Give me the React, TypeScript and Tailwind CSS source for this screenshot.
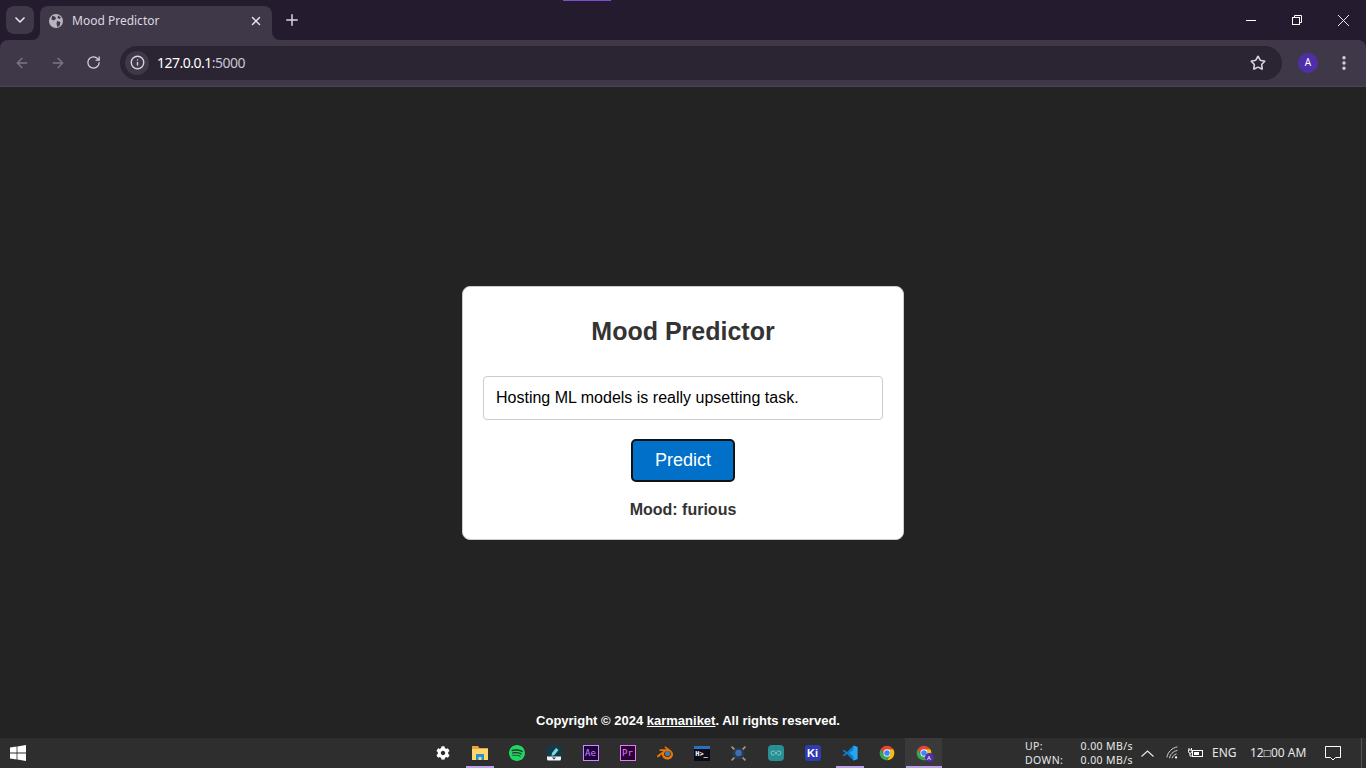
import { ChevronDown, X, Plus, ArrowLeft, ArrowRight, RotateCw, Info, Star, EllipsisVertical } from 'lucide-react'
import { FaCog } from 'react-icons/fa'
import { SiSpotify, SiBlender } from 'react-icons/si'

const sans = "font-['Liberation_Sans',Arial,sans-serif]"

function ChromeLogo({ badge }: { badge?: boolean }) {
  return (
    <span className="relative block w-4 h-4">
      <svg viewBox="0 0 48 48" className="w-4 h-4">
        <path d="M4.95 13A22 22 0 0 1 43.05 13H24A11 11 0 0 0 14.47 29.5Z" fill="#ea4335" />
        <path d="M4.95 13A22 22 0 0 1 43.05 13H24A11 11 0 0 0 14.47 29.5Z" fill="#fbbc04" transform="rotate(120 24 24)" />
        <path d="M4.95 13A22 22 0 0 1 43.05 13H24A11 11 0 0 0 14.47 29.5Z" fill="#34a853" transform="rotate(240 24 24)" />
        <circle cx="24" cy="24" r="11" fill="#fff" />
        <circle cx="24" cy="24" r="8.5" fill="#4285f4" />
      </svg>
      {badge && (
        <span className="absolute -right-[2px] -bottom-[1px] w-[9px] h-[9px] rounded-full bg-[#4f2fa8] flex items-center justify-center text-[6px] leading-none text-white">A</span>
      )}
    </span>
  )
}

function Explorer() {
  return (
    <svg viewBox="0 0 16 16" className="w-4 h-4">
      <path d="M0 1h6l1.500 2H16v3H0z" fill="#e8a33d" />
      <path d="M0 4h16v11H0z" fill="#fcd770" />
      <path d="M4 9h8v6h-2.500v-3h-3v3H4z" fill="#2b8fd6" />
    </svg>
  )
}

function Pen() {
  return (
    <svg viewBox="0 0 16 16" className="w-4 h-4">
      <rect x="0.500" y="0.500" width="15" height="15" rx="3" fill="#17384a" />
      <path d="M6 8l4-5 2.500 2-4 5-3 1z" fill="#6fe0d8" />
      <path d="M1 11.500h14v2.500a1.500 1.500 0 0 1-1.500 1.500h-11A1.500 1.500 0 0 1 1 14z" fill="#f4f4f4" />
      <path d="M6 12.500h4l-2 2z" fill="#17384a" />
    </svg>
  )
}

function Adobe({ label, box }: { label: string; box: string }) {
  return (
    <span className={`w-4 h-4 border flex items-center justify-center font-['DejaVu_Sans_Mono',monospace] text-[9px] leading-none ${box}`}>
      {label}
    </span>
  )
}

function Blender() {
  return (
    <span className="relative block w-4 h-4">
      <SiBlender className="w-4 h-4 text-[#ea7600]" />
      <span className="absolute left-[8px] top-[6px] w-[5px] h-[5px] rounded-full bg-[#3f7fb5]" />
    </span>
  )
}

function Terminal() {
  return (
    <span className="w-4 h-[15px] bg-[#0c0c16] border-t-[3px] border-t-[#2a6fc0] flex items-center justify-center font-['DejaVu_Sans_Mono',monospace] text-[7px] font-bold leading-none text-white">
      H&gt;_
    </span>
  )
}

function Drone() {
  return (
    <svg viewBox="0 0 16 16" className="w-[17px] h-[17px]">
      <path d="M1.500 1.500l13 13M14.500 1.500l-13 13" stroke="#a89a7c" strokeWidth="1.500" />
      <circle cx="8" cy="8" r="5.500" fill="#2a3a55" />
      <circle cx="8" cy="7.500" r="3" fill="#3f6fb0" />
    </svg>
  )
}

function Arduino() {
  return (
    <svg viewBox="0 0 16 16" className="w-4 h-4">
      <rect width="16" height="16" rx="4" fill="#2a8f94" />
      <path d="M8 8c-1-1.500-2-2-3-2a2 2 0 0 0 0 4c1 0 2-.5 3-2s2-2 3-2a2 2 0 0 1 0 4c-1 0-2-.5-3-2z" fill="none" stroke="#7fc6c6" strokeWidth="1" />
    </svg>
  )
}

function Kicad() {
  return (
    <span className={`w-4 h-4 rounded-[3px] bg-[#2f3bb0] flex items-center justify-center ${sans} text-[11px] font-bold leading-none text-white`}>
      Ki
    </span>
  )
}

function VsCode() {
  return (
    <svg viewBox="0 0 16 16" className="w-4 h-4">
      <path d="M11.500.500L5 7 2 4.700.500 5.500 3.300 8 .500 10.500 2 11.300 5 9l6.500 6.500L15.500 14V2z" fill="#0a7fd0" />
      <path d="M11.500.500L15.500 2v12l-4 1.500zM11.500 4.800L7.500 8l4 3.200z" fill="#2aa5ee" />
    </svg>
  )
}

const apps = [
  { key: 'gear', icon: <FaCog className="w-[14px] h-[14px] text-white" /> },
  { key: 'explorer', icon: <Explorer />, open: 'w-[28px]' },
  { key: 'spotify', icon: <SiSpotify className="w-4 h-4 text-[#1ed760]" /> },
  { key: 'pen', icon: <Pen /> },
  { key: 'ae', icon: <Adobe label="Ae" box="bg-[#1f0040] border-[#c58cff] text-[#c58cff]" /> },
  { key: 'pr', icon: <Adobe label="Pr" box="bg-[#2a0034] border-[#e779ff] text-[#e779ff]" /> },
  { key: 'blender', icon: <Blender /> },
  { key: 'terminal', icon: <Terminal /> },
  { key: 'drone', icon: <Drone /> },
  { key: 'arduino', icon: <Arduino /> },
  { key: 'kicad', icon: <Kicad /> },
  { key: 'vscode', icon: <VsCode />, open: 'w-[28px]' },
  { key: 'chrome', icon: <ChromeLogo /> },
  { key: 'profile', icon: <ChromeLogo badge />, open: 'w-[36px]', active: true },
]

export default function App() {
  return (
    <div className="w-[1366px] h-[768px] overflow-hidden flex flex-col bg-[#232323]">
      {/* Tab strip */}
      <div className="relative h-10 shrink-0 bg-[#241c2e] flex items-start pt-[6px] pl-[6px] text-[#e6e1ec]">
        <span className="absolute left-[563px] top-0 w-[48px] h-px bg-[#7a4fd0]" />
        <button className="w-7 h-7 rounded-lg bg-[#3f3849] flex items-center justify-center">
          <ChevronDown className="w-4 h-4" strokeWidth={2.500} />
        </button>
        <div className="relative ml-[6px] w-[232px] h-[34px] rounded-t-lg bg-[#3f3849] flex items-center pl-2 pr-[9px] pb-[5px]">
          <span className="absolute -left-2 bottom-0 w-2 h-2 bg-[#3f3849]"><span className="block w-2 h-2 rounded-br-lg bg-[#241c2e]" /></span>
          <span className="absolute -right-2 bottom-0 w-2 h-2 bg-[#3f3849]"><span className="block w-2 h-2 rounded-bl-lg bg-[#241c2e]" /></span>
          <svg viewBox="0 0 16 16" className="w-4 h-4 shrink-0">
            <circle cx="8" cy="8" r="7" fill="#b9b5bf" />
            <path d="M4 3l3 .500 1 2-2 2-2.500-1zM9 8l3.500 1-1 4-2 1-1-3zM10 2.500l3 2-1.500 1.500-2-1z" fill="#3f3849" />
          </svg>
          <span className="ml-2 flex-1 font-['Noto_Sans',sans-serif] text-[12px] text-[#dcd7e2]">Mood Predictor</span>
          <X className="w-[14px] h-[14px]" strokeWidth={2.500} />
        </div>
        <Plus className="ml-[11px] mt-[5px] w-[18px] h-[18px] text-[#d9d3e0]" strokeWidth={2} />
        <div className="ml-auto h-[28px] flex items-center text-white">
          <span className="w-[46px] flex justify-center"><span className="block w-[10px] h-px bg-white" /></span>
          <span className="w-[46px] flex justify-center">
            <svg viewBox="0 0 10 10" className="w-[10px] h-[10px]" fill="none" stroke="#fff" strokeWidth="1">
              <rect x="0.500" y="2.500" width="7" height="7" />
              <path d="M2.500 2.500V.500h7v7h-2" />
            </svg>
          </span>
          <span className="w-[46px] flex justify-center">
            <svg viewBox="0 0 12 12" className="w-[11px] h-[11px]" stroke="#fff" strokeWidth="1"><path d="M0 0l12 12M12 0L0 12" /></svg>
          </span>
        </div>
      </div>

      {/* Toolbar */}
      <div className="h-[47px] shrink-0 bg-[#241c2e]">
        <div className="h-full rounded-t-lg bg-[#3f3849] border-b border-b-[#4a4453] flex items-center pb-[1px] text-[#d9d3e0]">
          <span className="w-[40px] pl-[14px]"><ArrowLeft className="w-4 h-4 text-[#7c7785]" strokeWidth={2} /></span>
          <span className="w-[36px] pl-[10px]"><ArrowRight className="w-4 h-4 text-[#7c7785]" strokeWidth={2} /></span>
          <span className="w-[44px] pl-[10px]"><RotateCw className="w-[15px] h-[15px]" strokeWidth={2} /></span>
          <div className="w-[1162px] h-[34px] rounded-full bg-[#2a2433] flex items-center pl-[5px] pr-[16px]">
            <span className="w-6 h-6 rounded-full bg-[#3f3849] flex items-center justify-center">
              <Info className="w-[15px] h-[15px]" strokeWidth={2.200} />
            </span>
            <span className="ml-2 flex-1 font-['Noto_Sans',sans-serif] text-[14px] tracking-[-0.5px]">
              <span className="text-white">127.0.0.1</span><span className="text-[#c9c4d0]">:5000</span>
            </span>
            <Star className="w-4 h-4" strokeWidth={2.400} />
          </div>
          <span className="ml-4 w-5 h-5 rounded-full bg-[#4f2fa8] flex items-center justify-center font-['Noto_Sans',sans-serif] text-[10px] text-white">A</span>
          <EllipsisVertical className="ml-[17px] w-[18px] h-[18px]" strokeWidth={2.500} />
        </div>
      </div>

      {/* Page */}
      <div className={`flex-1 min-h-0 flex flex-col items-center ${sans}`}>
        <main className="flex-1 flex items-center justify-center pt-[37px]">
          <div className="w-[442px] h-[254px] rounded-lg border border-[#cccccc] bg-white px-5 pt-[25px] flex flex-col items-center">
            <h1 className="text-[25px] leading-[38px] font-bold text-[#333333]">Mood Predictor</h1>
            <input
              readOnly
              value="Hosting ML models is really upsetting task."
              className="mt-[26px] w-[400px] h-[44px] rounded-[4px] border border-[#cccccc] bg-white px-3 text-[16px] text-black outline-none"
            />
            <button className="mt-[19px] w-[104px] h-[43px] rounded-[5px] border-2 border-[#111111] bg-[#0070c9] text-[18px] text-white">Predict</button>
            <p className="mt-[19px] text-[16px] leading-[18px] font-bold text-[#333333]">Mood: furious</p>
          </div>
        </main>
        <footer className="h-[36px] pt-[11px] pl-[10px] text-[13px] leading-4 font-bold text-white">
          Copyright © 2024 <a className="underline">karmaniket</a>. All rights reserved.
        </footer>
      </div>

      {/* Taskbar */}
      <div className="h-[30px] shrink-0 bg-[#2e2e2e] flex items-stretch text-white">
        <div className="w-[424px] pl-[10px] flex items-center">
          <svg viewBox="0 0 16 16" className="w-4 h-4" fill="#fff">
            <path d="M0 2.400l6.600-.900v6H0zM7.400 1.400L16 0v7.500H7.400zM0 8.400h6.600v6L0 13.500zM7.400 8.400H16V16l-8.600-1.400z" />
          </svg>
        </div>
        <div className="flex">
          {apps.map(app => (
            <div key={app.key} className={`relative w-[37px] flex items-center justify-center ${app.active ? 'bg-[#3a3a3a]' : ''}`}>
              {app.icon}
              {app.open && <span className={`absolute bottom-0 left-1/2 -translate-x-1/2 h-[2px] bg-[#b9a0e8] ${app.open}`} />}
            </div>
          ))}
        </div>
        <div className="ml-[83px] w-[108px] flex flex-col justify-center font-['Noto_Sans',sans-serif] text-[10.500px] leading-[14px] tracking-[0.4px] text-[#e8e8e8]">
          <div className="flex justify-between"><span>UP:</span><span>0.00 MB/s</span></div>
          <div className="flex justify-between"><span>DOWN:</span><span>0.00 MB/s</span></div>
        </div>
        <div className="flex items-center font-['Noto_Sans',sans-serif] text-[12px] text-[#e8e8e8]">
          <svg viewBox="0 0 13 7" className="ml-[8px] w-[13px] h-[7px]" fill="none" stroke="#e8e8e8" strokeWidth="1.200"><path d="M.500 6.500l6-5.500 6 5.500" /></svg>
          <svg viewBox="0 0 16 16" className="ml-[12px] w-[14px] h-[14px]" fill="none" stroke="#d8d8d8" strokeWidth="1.100">
            <path d="M1 13C2 7 7 2 13 1M4 14c.500-4 4-8 9-9M7 14c.500-2 2-4 5-5" />
            <circle cx="11.500" cy="13" r="1.300" fill="#fff" stroke="none" />
          </svg>
          <svg viewBox="0 0 16 12" className="ml-[8px] w-[16px] h-[12px]" fill="none" stroke="#fff" strokeWidth="1">
            <path d="M1 1v2M3.500 1v2M0.500 3h3.500v1.500a1.700 1.700 0 0 1-3.500 0zM2 6v3h2" />
            <rect x="4.500" y="3.500" width="10" height="6" />
            <rect x="6" y="5" width="5" height="3" fill="#fff" stroke="none" />
          </svg>
          <span className="ml-[8px] w-[38px]">ENG</span>
          <span className="w-[66px]">12□00 AM</span>
          <svg viewBox="0 0 16 16" className="ml-[9px] w-4 h-4" fill="none" stroke="#fff" strokeWidth="1">
            <path d="M.500 1.500h15v11h-5l-2.500 2.500-2.500-2.500h-5z" />
          </svg>
          <span className="ml-[20px] w-px h-[30px] bg-[#555555]" />
        </div>
      </div>
    </div>
  )
}
